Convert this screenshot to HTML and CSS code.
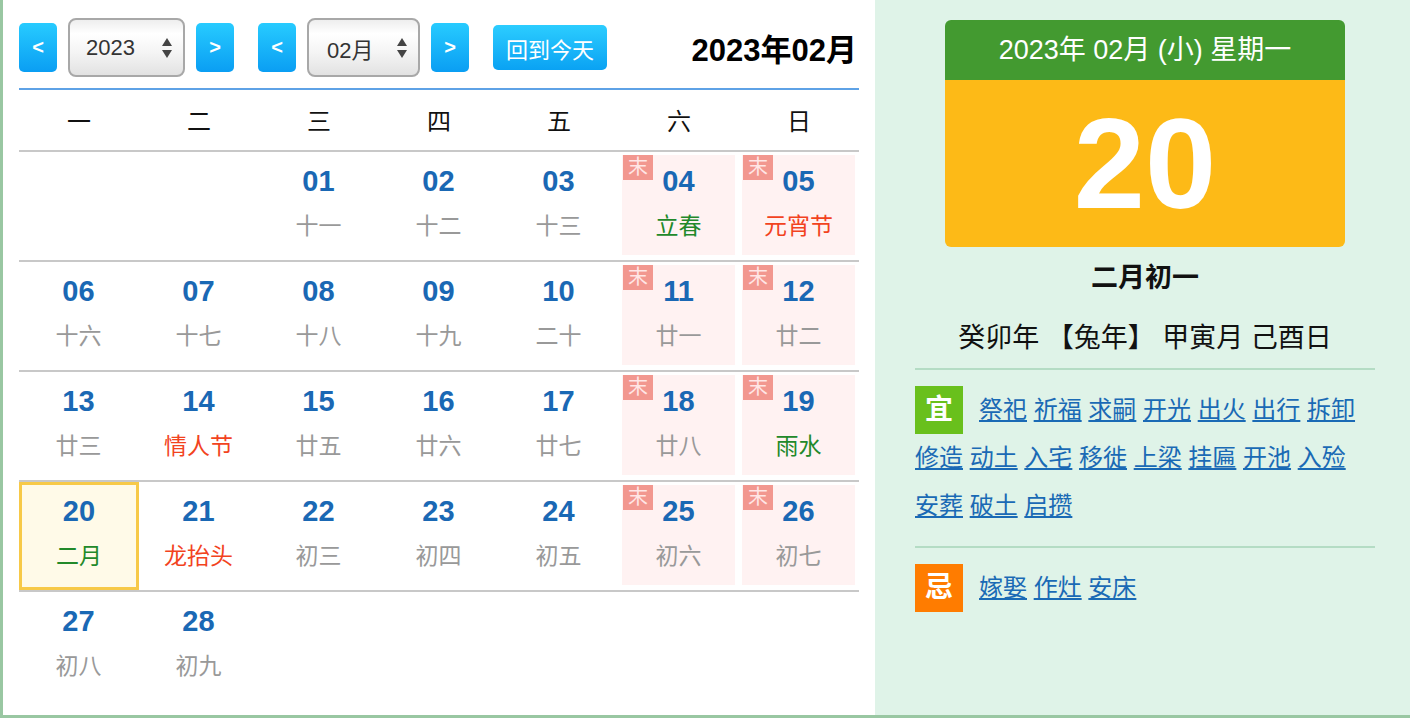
FILE: index.html
```html
<!DOCTYPE html>
<html lang="zh">
<head>
<meta charset="utf-8">
<title>万年历</title>
<link rel="stylesheet" href="styles.css">
</head>
<body>
<div class="page">
  <section class="left">
    <div class="toolbar">
      <button class="nav">&lt;</button>
      <div class="select sel-year"><span>2023</span><svg class="arrows" width="12" height="22" viewBox="0 0 12 22"><path d="M6 1 L11 9 H1 Z M6 21 L11 13 H1 Z" fill="#444"/></svg></div>
      <button class="nav">&gt;</button>
      <button class="nav gap-left">&lt;</button>
      <div class="select sel-month"><span>02月</span><svg class="arrows" width="12" height="22" viewBox="0 0 12 22"><path d="M6 1 L11 9 H1 Z M6 21 L11 13 H1 Z" fill="#444"/></svg></div>
      <button class="nav">&gt;</button>
      <button class="today-btn">回到今天</button>
      <div class="title">2023年02月</div>
    </div>
    <div class="cal">
      <div class="weekdays">
        <div>一</div><div>二</div><div>三</div><div>四</div><div>五</div><div>六</div><div>日</div>
      </div>
      <div class="week">
        <div class="cell"></div>
        <div class="cell"></div>
        <div class="cell"><div class="day"><div class="num">01</div><div class="lunar">十一</div></div></div>
        <div class="cell"><div class="day"><div class="num">02</div><div class="lunar">十二</div></div></div>
        <div class="cell"><div class="day"><div class="num">03</div><div class="lunar">十三</div></div></div>
        <div class="cell"><div class="day weekend"><span class="tag">末</span><div class="num">04</div><div class="lunar green">立春</div></div></div>
        <div class="cell"><div class="day weekend"><span class="tag">末</span><div class="num">05</div><div class="lunar red">元宵节</div></div></div>
      </div>
      <div class="week">
        <div class="cell"><div class="day"><div class="num">06</div><div class="lunar">十六</div></div></div>
        <div class="cell"><div class="day"><div class="num">07</div><div class="lunar">十七</div></div></div>
        <div class="cell"><div class="day"><div class="num">08</div><div class="lunar">十八</div></div></div>
        <div class="cell"><div class="day"><div class="num">09</div><div class="lunar">十九</div></div></div>
        <div class="cell"><div class="day"><div class="num">10</div><div class="lunar">二十</div></div></div>
        <div class="cell"><div class="day weekend"><span class="tag">末</span><div class="num">11</div><div class="lunar">廿一</div></div></div>
        <div class="cell"><div class="day weekend"><span class="tag">末</span><div class="num">12</div><div class="lunar">廿二</div></div></div>
      </div>
      <div class="week">
        <div class="cell"><div class="day"><div class="num">13</div><div class="lunar">廿三</div></div></div>
        <div class="cell"><div class="day"><div class="num">14</div><div class="lunar red">情人节</div></div></div>
        <div class="cell"><div class="day"><div class="num">15</div><div class="lunar">廿五</div></div></div>
        <div class="cell"><div class="day"><div class="num">16</div><div class="lunar">廿六</div></div></div>
        <div class="cell"><div class="day"><div class="num">17</div><div class="lunar">廿七</div></div></div>
        <div class="cell"><div class="day weekend"><span class="tag">末</span><div class="num">18</div><div class="lunar">廿八</div></div></div>
        <div class="cell"><div class="day weekend"><span class="tag">末</span><div class="num">19</div><div class="lunar green">雨水</div></div></div>
      </div>
      <div class="week">
        <div class="cell cell-today"><div class="day today"><div class="num">20</div><div class="lunar green">二月</div></div></div>
        <div class="cell"><div class="day"><div class="num">21</div><div class="lunar red">龙抬头</div></div></div>
        <div class="cell"><div class="day"><div class="num">22</div><div class="lunar">初三</div></div></div>
        <div class="cell"><div class="day"><div class="num">23</div><div class="lunar">初四</div></div></div>
        <div class="cell"><div class="day"><div class="num">24</div><div class="lunar">初五</div></div></div>
        <div class="cell"><div class="day weekend"><span class="tag">末</span><div class="num">25</div><div class="lunar">初六</div></div></div>
        <div class="cell"><div class="day weekend"><span class="tag">末</span><div class="num">26</div><div class="lunar">初七</div></div></div>
      </div>
      <div class="week last">
        <div class="cell"><div class="day"><div class="num">27</div><div class="lunar">初八</div></div></div>
        <div class="cell"><div class="day"><div class="num">28</div><div class="lunar">初九</div></div></div>
        <div class="cell"></div>
        <div class="cell"></div>
        <div class="cell"></div>
        <div class="cell"></div>
        <div class="cell"></div>
      </div>
    </div>
  </section>
  <aside class="right">
    <div class="card">
      <div class="card-head">2023年 02月 (小) 星期一</div>
      <div class="card-body">20</div>
    </div>
    <div class="lunar-date">二月初一</div>
    <div class="ganzhi">癸卯年 【兔年】 甲寅月 己酉日</div>
    <div class="divider"></div>
    <div class="acts"><span class="badge yi">宜</span><a href="#">祭祀</a> <a href="#">祈福</a> <a href="#">求嗣</a> <a href="#">开光</a> <a href="#">出火</a> <a href="#">出行</a> <a href="#">拆卸</a> <a href="#">修造</a> <a href="#">动土</a> <a href="#">入宅</a> <a href="#">移徙</a> <a href="#">上梁</a> <a href="#">挂匾</a> <a href="#">开池</a> <a href="#">入殓</a> <a href="#">安葬</a> <a href="#">破土</a> <a href="#">启攒</a></div>
    <div class="divider"></div>
    <div class="acts"><span class="badge ji">忌</span><a href="#">嫁娶</a> <a href="#">作灶</a> <a href="#">安床</a></div>
  </aside>
</div>
</body>
</html>
```

FILE: styles.css
```css
* { box-sizing: border-box; }
html, body { margin: 0; padding: 0; }
body {
  font-family: "Liberation Sans", "Noto Sans CJK SC", sans-serif;
  color: #111;
  background: #fff;
}
.page {
  display: flex;
  width: 1410px;
  height: 718px;
  border-left: 3px solid #99c7a2;
  border-bottom: 3px solid #99c7a2;
  overflow: hidden;
}
.left {
  width: 872px;
  flex: none;
  background: #fff;
  padding: 18px 16px 0 16px;
}
.toolbar {
  display: flex;
  align-items: center;
  height: 59px;
  margin-bottom: 11px;
}
.nav {
  width: 38px;
  height: 49px;
  border: none;
  border-radius: 5px;
  background: linear-gradient(#27cbff, #0a9ef3);
  color: #fff;
  font-family: "Liberation Sans", sans-serif;
  font-weight: bold;
  font-size: 20px;
  padding: 0;
  margin-right: 11px;
}
.nav.gap-left { margin-left: 13px; }
.select {
  height: 59px;
  border: 2px solid #a8a8a8;
  border-radius: 8px;
  background: linear-gradient(#eeeeee, #ffffff 25%, #f4f4f4 60%, #e2e2e2);
  display: flex;
  align-items: center;
  justify-content: space-between;
  padding: 0 10px 0 16px;
  font-size: 22px;
  color: #333;
  margin-right: 11px;
}
.sel-year { width: 117px; }
.sel-month { width: 113px; padding-left: 18px; }
.today-btn {
  margin-left: 13px;
  width: 114px;
  height: 45px;
  border: none;
  border-radius: 5px;
  background: linear-gradient(#2ccdff, #0aa2f3);
  color: #fff;
  font-family: "Liberation Sans", "Noto Sans CJK SC", sans-serif;
  font-size: 22px;
  padding: 0;
}
.title {
  margin-left: auto;
  margin-right: 2px;
  font-size: 31px;
  font-weight: bold;
  color: #000;
}
.cal {
  width: 840px;
  border-top: 2px solid #5ea2e6;
}
.weekdays {
  display: grid;
  grid-template-columns: repeat(7, 120px);
  height: 62px;
  border-bottom: 2px solid #c8c8c8;
}
.weekdays div {
  text-align: center;
  font-size: 24px;
  line-height: 64px;
  color: #111;
}
.week {
  display: grid;
  grid-template-columns: repeat(7, 120px);
  height: 110px;
  border-bottom: 2px solid #c8c8c8;
}
.week.last { border-bottom: none; }
.cell { padding: 3px 4px 5px 3px; }
.cell-today { padding: 0; }
.day {
  position: relative;
  height: 100%;
  padding-top: 10px;
  text-align: center;
}
.day.weekend { background: #fff2f2; }
.day.today {
  background: #fffae8;
  border: 3px solid #f7c948;
  padding-top: 10px;
}
.num {
  font-size: 29px;
  font-weight: bold;
  line-height: 32px;
  color: #1a68b4;
}
.lunar {
  margin-top: 14px;
  font-size: 23px;
  line-height: 30px;
  color: #999;
}
.lunar.green { color: #22892a; }
.lunar.red { color: #f2431e; }
.tag {
  position: absolute;
  left: 1px;
  top: 0;
  width: 30px;
  height: 25px;
  background: #f2978f;
  color: #ffe6e6;
  font-size: 20px;
  line-height: 25px;
  text-align: center;
}
.right {
  flex: 1;
  background: #dff3e8;
  padding: 20px 35px 0 40px;
}
.card {
  width: 400px;
  margin: 0 auto;
  border-radius: 6px;
  overflow: hidden;
}
.card-head {
  height: 60px;
  background: #439a30;
  color: #fff;
  font-size: 27px;
  line-height: 60px;
  text-align: center;
}
.card-body {
  height: 167px;
  background: #fdba17;
  color: #fff;
  font-size: 128px;
  font-weight: bold;
  line-height: 167px;
  text-align: center;
}
.lunar-date {
  margin-top: 15px;
  text-align: center;
  font-size: 27px;
  font-weight: bold;
  line-height: 32px;
  color: #111;
}
.ganzhi {
  margin-top: 28px;
  text-align: center;
  font-size: 27px;
  line-height: 32px;
  color: #111;
}
.divider {
  height: 2px;
  background: #b4dcc4;
  margin-top: 14px;
}
.acts {
  padding-top: 16px;
  font-size: 24px;
  line-height: 48px;
}
.acts + .divider { margin-top: 16px; }
.acts a {
  color: #1a6ab5;
  text-decoration: underline;
}
.badge {
  display: inline-block;
  vertical-align: top;
  width: 48px;
  height: 48px;
  margin-right: 16px;
  color: #fff;
  font-weight: bold;
  font-size: 28px;
  line-height: 48px;
  text-align: center;
}
.badge.yi { background: #69c01c; }
.badge.ji { background: #ff7c00; }
```
